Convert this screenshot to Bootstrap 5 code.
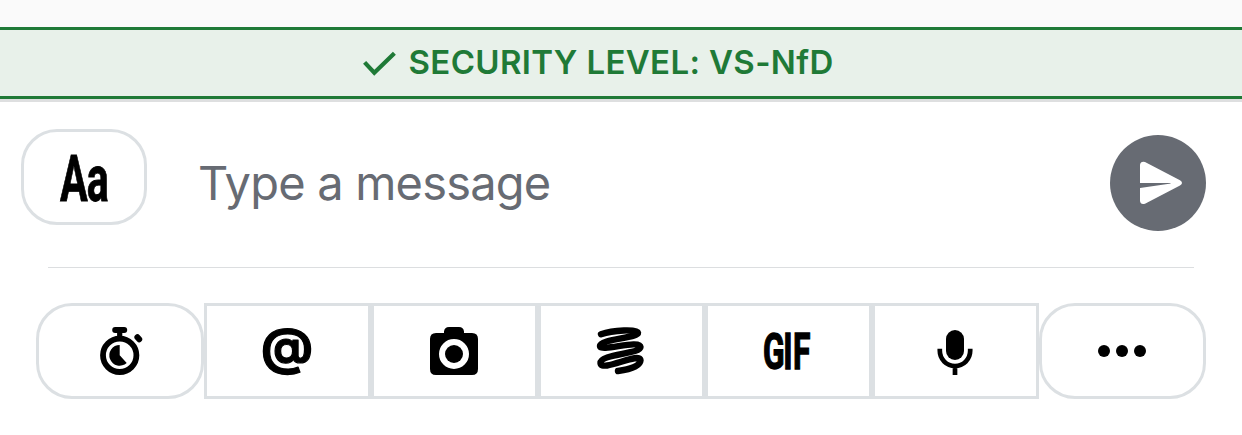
<!DOCTYPE html>
<html lang="en">
<head>
<meta charset="utf-8">
<meta name="viewport" content="width=device-width, initial-scale=1">
<title>Message composer</title>
<link href="https://cdn.jsdelivr.net/npm/bootstrap@5.3.0/dist/css/bootstrap.min.css" rel="stylesheet">
<style>
  body { font-family: Inter, "Liberation Sans", sans-serif; background: #fff; height: 435px; overflow: hidden; }
  .top-strip { height: 27px; background: #fafafa; }
  .security { height: 75px; background: #e8f1ea; border-top: 3px solid #1f7a37; border-bottom: 3px solid #dedfe0; box-shadow: inset 0 -3px #1f7a37; color: #1f7a37; }
  .security-label { font-size: 33px; font-weight: 600; letter-spacing: .35px; line-height: 1; white-space: nowrap; margin-left: 9.5px; padding-bottom: 4px; }
  .composer { height: 165px; padding: 27px 36px 0 21px; }
  .tool { border: 3px solid #dce0e3; height: 96px; background: #fff; color: #000; }
  .format { width: 126px; border-radius: 36px; }
  .message { font-size: 47px; line-height: 58px; letter-spacing: -.8px; color: #676b73; margin-left: 51px; margin-top: 25px; padding: 0; background: transparent; box-shadow: none; }
  .message::placeholder { color: #676b73; opacity: 1; }
  .send { width: 96px; height: 96px; background: #676b73; margin-top: 6px; }
  .divider { height: 1px; background: #dcdee0; margin: 0 48px; }
  .tools { padding: 35px 36px 0; }
  .tool-end { border-radius: 36px; }
  .tool-first { width: 168px; }
  .tools .col svg { margin-right: 1px; }
  svg { display: block; overflow: visible; flex: none; }
</style>
</head>
<body>
<div class="top-strip"></div>
<div class="security d-flex justify-content-center">
  <div class="d-flex" style="width:516px">
    <svg width="36" height="66" viewBox="0 0 36 66" fill="none" stroke="currentColor" stroke-width="4.2"><path d="M1.6 32.4 11.3 42.8 31.4 23.2"/></svg>
    <span class="security-label d-flex align-items-center">SECURITY LEVEL: VS-NfD</span>
  </div>
</div>
<div class="composer d-flex align-items-start">
  <button class="tool format flex-shrink-0 d-flex align-items-center justify-content-center p-0" aria-label="Format">
    <svg width="48" height="48"><text transform="scale(.63 1)" x="0 42.5" y="47.7" font-family="Roboto" font-weight="700" font-size="65.5" stroke="#000" stroke-width=".8">Aa</text></svg>
  </button>
  <input class="message form-control border-0 flex-fill" placeholder="Type a message" aria-label="Type a message">
  <button class="send btn rounded-circle border-0 p-0 flex-shrink-0" aria-label="Send">
    <svg width="96" height="96" fill="#fff"><path d="M30 48V30Q30.5 26 35 27L70 45.3Q74 48 70 50.6L35 68.7Q30.5 70 30 66V53L61 48.5 60 48Z"/></svg>
  </button>
</div>
<div class="divider"></div>
<div class="tools d-flex">
  <button class="tool tool-end tool-first flex-shrink-0 d-flex align-items-center justify-content-center p-0" aria-label="Timer">
    <svg width="48" height="48"><circle cx="23.7" cy="28.3" r="16.7" fill="none" stroke="#000" stroke-width="5.8"/><rect x="16.2" width="15" height="6" rx="3"/><path d="M21.1 4H26.3V12H21.1ZM23.7 28.3 30.7 36A10.4 10.4 0 1 1 23.7 17.9Z"/><path d="M41.4 10.3 43.2 12.3" stroke="#000" stroke-width="6" stroke-linecap="round"/></svg>
  </button>
  <button class="tool col d-flex align-items-center justify-content-center p-0" aria-label="Mention">
    <svg width="48" height="48"><text x="-2" y="36.8" font-family="Inter" font-weight="700" font-size="49.5" textLength="52" lengthAdjust="spacingAndGlyphs" stroke="#000" stroke-width="1.2" stroke-linejoin="round">@</text></svg>
  </button>
  <button class="tool col d-flex align-items-center justify-content-center p-0" aria-label="Camera">
    <svg width="48" height="48"><path fill-rule="evenodd" d="M6 6H14V4.5Q14.5 0 19 0H29Q33.5 0 34 4.5V6H42Q48 6 48 12V42Q48 48 42 48H6Q0 48 0 42V12Q0 6 6 6ZM24 12A15 15 0 1 0 24 42 15 15 0 1 0 24 12Z"/><circle cx="24" cy="27" r="9"/></svg>
  </button>
  <button class="tool col d-flex align-items-center justify-content-center p-0" aria-label="Sketch">
    <svg width="48" height="48" fill="none" stroke="#000" stroke-width="6.4" stroke-linecap="round"><path d="M4 7.2C16 3 40.5 2 41 5.7C41.5 11 3 12 3 19C3 25.5 43 12 43.5 20C43.5 27 3 27 3.5 36C4 46 43.5 24 43.5 33.5C43 39 33 42.5 21 44"/></svg>
  </button>
  <button class="tool col d-flex align-items-center justify-content-center p-0" aria-label="GIF">
    <svg width="48" height="48"><text transform="scale(.64 1)" x="-1.5 30.2 45.4" y="41.5" font-family="Roboto" font-weight="700" font-size="49.5" stroke="#000" stroke-width="1.4">GIF</text></svg>
  </button>
  <button class="tool col d-flex align-items-center justify-content-center p-0" aria-label="Audio">
    <svg width="48" height="48"><rect x="15" y="3" width="18" height="30" rx="9"/><path d="M8.8 21.7V23.8A15.2 15.2 0 0 0 39.2 23.8V21.7M24 39V48" fill="none" stroke="#000" stroke-width="4.7"/></svg>
  </button>
  <button class="tool tool-end col d-flex align-items-center justify-content-center p-0" aria-label="More">
    <svg width="48" height="48"><circle cx="6" cy="24" r="6"/><circle cx="24" cy="24" r="6"/><circle cx="42" cy="24" r="6"/></svg>
  </button>
</div>
<script src="https://cdn.jsdelivr.net/npm/bootstrap@5.3.0/dist/js/bootstrap.bundle.min.js"></script>
</body>
</html>
